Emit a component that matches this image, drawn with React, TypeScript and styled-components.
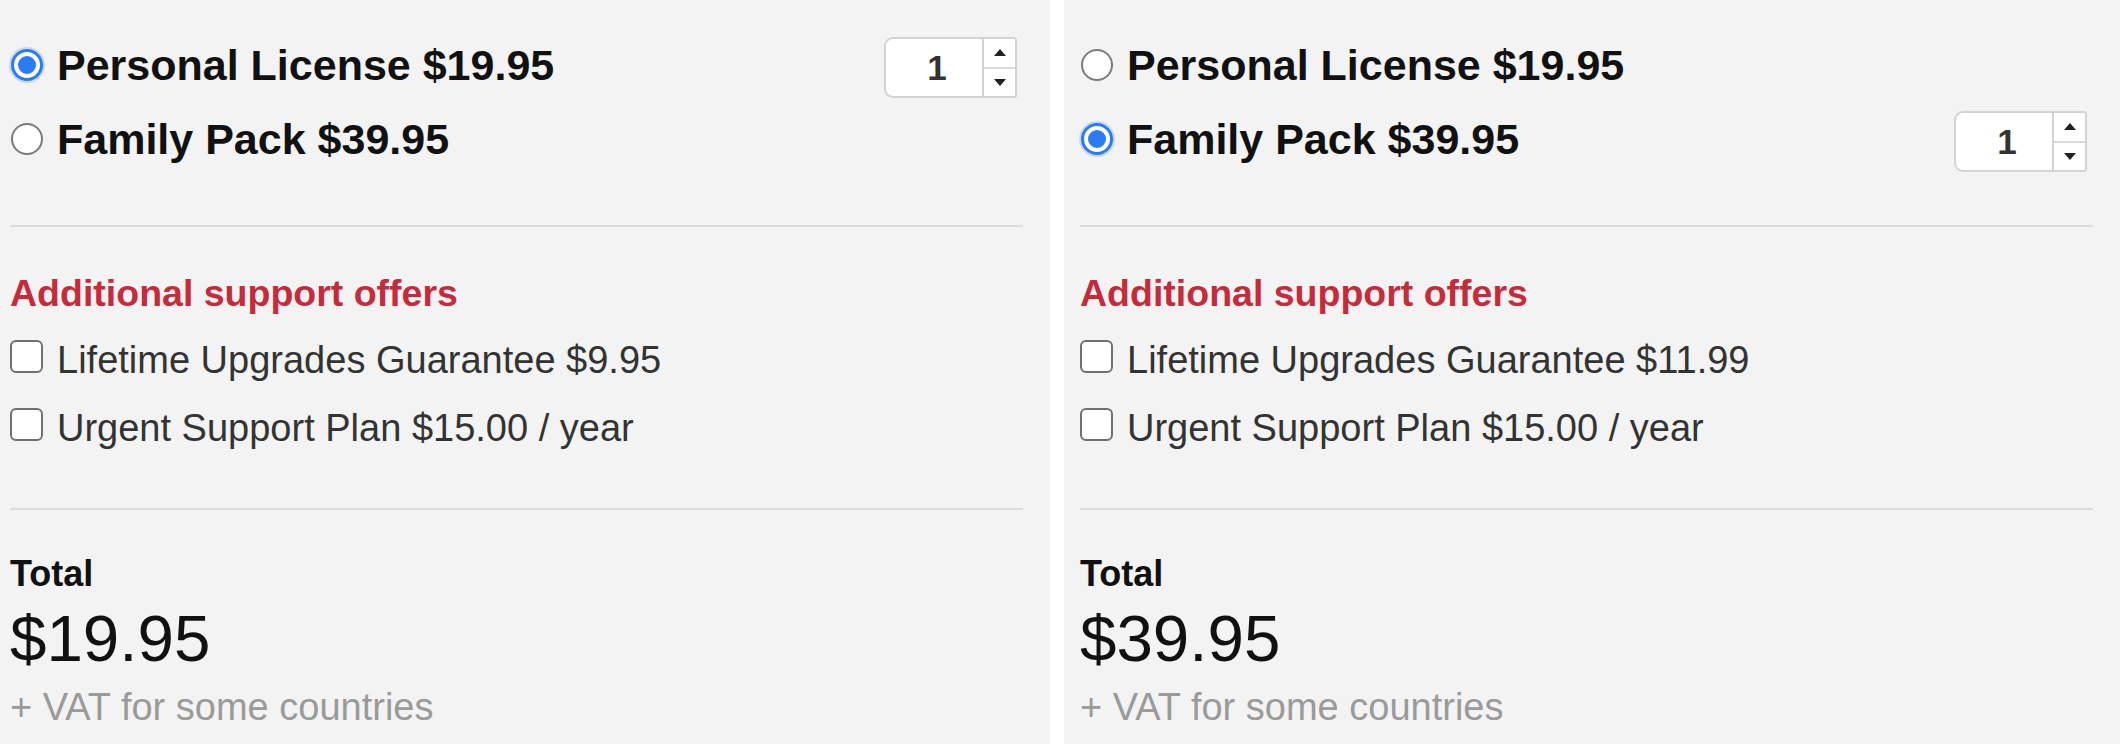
import React from 'react';
import styled, { createGlobalStyle } from 'styled-components';

const GlobalStyle = createGlobalStyle`
  html, body {
    margin: 0;
    padding: 0;
    background: #fff;
  }
  body {
    font-family: "Liberation Sans", Arial, Helvetica, sans-serif;
  }
`;

const Page = styled.div`
  display: grid;
  grid-template-columns: 1050px 1fr;
  column-gap: 14px;
  height: 744px;
`;

const Panel = styled.div<{ $inset: number }>`
  box-sizing: border-box;
  background: #f3f3f3;
  padding: 28px 27px 0 ${p => p.$inset}px;
  display: flex;
  flex-direction: column;
  overflow: hidden;
`;

const LicenseList = styled.div`
  display: flex;
  flex-direction: column;
  padding-bottom: 49px;
`;

const LicenseRow = styled.label`
  display: flex;
  align-items: center;
  height: 74px;
  font-size: 43px;
  font-weight: 700;
  line-height: 50px;
  color: #111;
  white-space: nowrap;
`;

const Radio = styled.span<{ $checked: boolean }>`
  flex: none;
  box-sizing: border-box;
  border-radius: 50%;
  ${p => p.$checked ? `
    width: 26px;
    height: 26px;
    margin: 0 17px 0 4px;
    background: #2a7bf5;
    border: 4px solid #fff;
    box-shadow: 0 0 0 3px #2a7bf5, 0 0 0 5px rgba(42, 123, 245, 0.22);
  ` : `
    width: 32px;
    height: 32px;
    margin: 0 14px 0 1px;
    background: #fff;
    border: 2px solid #7a7a7a;
  `}
`;

const Stepper = styled.div`
  margin: 5px 6px 0 auto;
  display: flex;
  box-sizing: border-box;
  width: 133px;
  height: 61px;
  background: #fff;
  border: 2px solid #d3d3d3;
  border-radius: 9px 3px 3px 9px;
  overflow: hidden;
`;

const StepValue = styled.div`
  flex: 1;
  display: flex;
  align-items: center;
  justify-content: center;
  padding-left: 6px;
  font-size: 35px;
  font-weight: 700;
  color: #333;
`;

const StepArrows = styled.div`
  width: 31px;
  display: flex;
  flex-direction: column;
  border-left: 2px solid #d3d3d3;
`;

const StepArrow = styled.div<{ $down?: boolean }>`
  flex: 1;
  display: flex;
  align-items: center;
  justify-content: center;
  & + & {
    border-top: 2px solid #dadada;
  }
  &::after {
    content: '';
    border-left: 6px solid transparent;
    border-right: 6px solid transparent;
    ${p => p.$down ? 'border-top: 7px solid #222;' : 'border-bottom: 7px solid #222;'}
  }
`;

const Divider = styled.hr`
  margin: 0 0 44px;
  border: none;
  height: 2px;
  background: #dcdcdc;
  flex: none;
`;

const Offers = styled.div`
  display: flex;
  flex-direction: column;
  padding-bottom: 58px;
`;

const OffersTitle = styled.div`
  font-size: 37.5px;
  font-weight: 700;
  line-height: 44px;
  color: #c62b3c;
  margin-bottom: 23px;
`;

const OfferList = styled.div`
  display: flex;
  flex-direction: column;
  gap: 24px;
`;

const OfferRow = styled.label`
  display: flex;
  align-items: center;
  height: 44px;
  font-size: 38px;
  line-height: 44px;
  color: #333;
  white-space: nowrap;
`;

const Checkbox = styled.span`
  flex: none;
  box-sizing: border-box;
  width: 33px;
  height: 33px;
  margin: 0 14px 7px 0;
  background: #fff;
  border: 2px solid #707070;
  border-radius: 6px;
`;

const TotalBlock = styled.div`
  display: flex;
  flex-direction: column;
`;

const TotalLabel = styled.div`
  font-size: 36px;
  font-weight: 700;
  line-height: 40px;
  color: #111;
`;

const TotalPrice = styled.div`
  margin-top: 10px;
  font-size: 65.5px;
  line-height: 70px;
  color: #111;
`;

const Vat = styled.div`
  margin-top: 13px;
  font-size: 38px;
  line-height: 40px;
  color: #9a9a9a;
`;

type Option = { name: string; price: string };

type Offer = {
  selected: number;
  lifetime: string;
  total: string;
  inset: number;
};

const licenses: Option[] = [
  { name: 'Personal License', price: '$19.95' },
  { name: 'Family Pack', price: '$39.95' },
];

const panels: Offer[] = [
  { selected: 0, lifetime: '$9.95', total: '$19.95', inset: 10 },
  { selected: 1, lifetime: '$11.99', total: '$39.95', inset: 16 },
];

const Qty = () => (
  <Stepper>
    <StepValue>1</StepValue>
    <StepArrows>
      <StepArrow />
      <StepArrow $down />
    </StepArrows>
  </Stepper>
);

const OrderPanel = ({ offer }: { offer: Offer }) => (
  <Panel $inset={offer.inset}>
    <LicenseList>
      {licenses.map((l, i) => (
        <LicenseRow key={l.name}>
          <Radio $checked={offer.selected === i} />
          {l.name} {l.price}
          {offer.selected === i && <Qty />}
        </LicenseRow>
      ))}
    </LicenseList>
    <Divider />
    <Offers>
      <OffersTitle>Additional support offers</OffersTitle>
      <OfferList>
        <OfferRow>
          <Checkbox />
          Lifetime Upgrades Guarantee {offer.lifetime}
        </OfferRow>
        <OfferRow>
          <Checkbox />
          Urgent Support Plan $15.00 / year
        </OfferRow>
      </OfferList>
    </Offers>
    <Divider />
    <TotalBlock>
      <TotalLabel>Total</TotalLabel>
      <TotalPrice>{offer.total}</TotalPrice>
      <Vat>+ VAT for some countries</Vat>
    </TotalBlock>
  </Panel>
);

const App = () => (
  <>
    <GlobalStyle />
    <Page>
      {panels.map((p, i) => (
        <OrderPanel key={i} offer={p} />
      ))}
    </Page>
  </>
);

export default App;
